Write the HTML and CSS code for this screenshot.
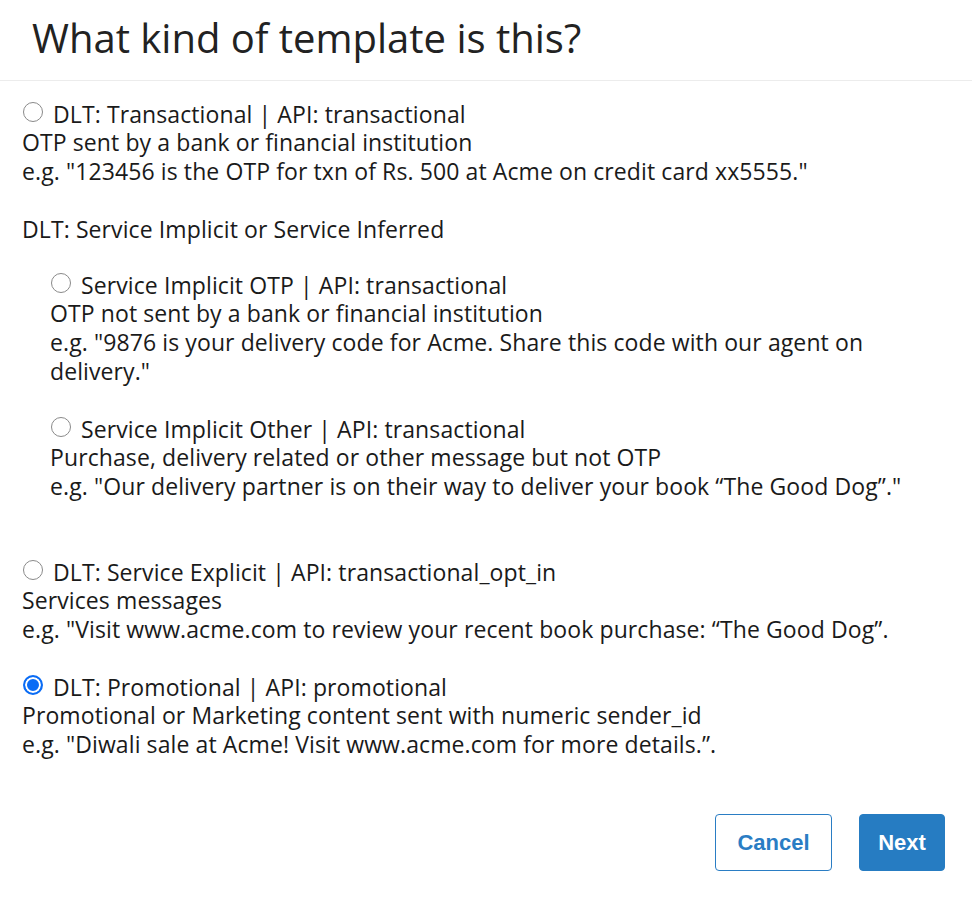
FILE: index.html
```html
<!DOCTYPE html>
<html>
<head>
<meta charset="utf-8">
<link rel="stylesheet" href="styles.css">
</head>
<body>
<div class="modal">
  <header class="modal-header">
    <h1 class="title">What kind of template is this?</h1>
  </header>
  <div class="modal-body">
    <div class="option">
      <label class="opt-label"><span class="radio"></span>DLT: Transactional | API: transactional</label>
      <div>OTP sent by a bank or financial institution</div>
      <div>e.g. "123456 is the OTP for txn of Rs. 500 at Acme on credit card xx5555."</div>
    </div>
    <div class="group-title">DLT: Service Implicit or Service Inferred</div>
    <div class="sub">
      <div class="option">
        <label class="opt-label"><span class="radio"></span>Service Implicit OTP | API: transactional</label>
        <div>OTP not sent by a bank or financial institution</div>
        <div>e.g. "9876 is your delivery code for Acme. Share this code with our agent on delivery."</div>
      </div>
      <div class="option">
        <label class="opt-label"><span class="radio"></span>Service Implicit Other | API: transactional</label>
        <div>Purchase, delivery related or other message but not OTP</div>
        <div>e.g. "Our delivery partner is on their way to deliver your book “The Good Dog”."</div>
      </div>
    </div>
    <div class="option">
      <label class="opt-label"><span class="radio"></span>DLT: Service Explicit | API: transactional_opt_in</label>
      <div>Services messages</div>
      <div>e.g. "Visit www.acme.com to review your recent book purchase: “The Good Dog”.</div>
    </div>
    <div class="option">
      <label class="opt-label"><span class="radio checked"></span>DLT: Promotional | API: promotional</label>
      <div>Promotional or Marketing content sent with numeric sender_id</div>
      <div>e.g. "Diwali sale at Acme! Visit www.acme.com for more details.”.</div>
    </div>
  </div>
  <footer class="modal-footer">
    <button class="btn btn-outline">Cancel</button>
    <button class="btn btn-primary">Next</button>
  </footer>
</div>
</body>
</html>
```
FILE: styles.css
```css
html, body {
  margin: 0;
  padding: 0;
  background: #fff;
}
body {
  font-family: "Open Sans", "Noto Sans", sans-serif;
  color: #1a1a1a;
  font-size: 23px;
  line-height: 29px;
  letter-spacing: 0.1px;
  width: 972px;
}
.modal-header {
  height: 81px;
  border-bottom: 1px solid #ececec;
  box-sizing: border-box;
  padding-left: 32px;
  display: flex;
  align-items: center;
}
.title {
  margin: 0;
  font-weight: 400;
  font-size: 40px;
  letter-spacing: 0;
  color: #222;
  line-height: 1;
  position: relative;
  top: -2px;
}
.modal-body {
  padding: 19px 22px 0 22px;
}
.option {
  margin-bottom: 29px;
}
.opt-label {
  display: flex;
  align-items: center;
  line-height: 28px;
}
.radio {
  width: 20px;
  height: 20px;
  border: 1px solid #8a8a8a;
  border-radius: 50%;
  box-sizing: border-box;
  margin: 0 10px 0 1px;
  flex: none;
  background: #fff;
  position: relative;
  top: -2px;
}
.radio.checked {
  border: 2px solid #0a6cf5;
  background: #0a6cf5;
  box-shadow: inset 0 0 0 2px #fff;
}
.group-title {
  margin-bottom: 27px;
}
.sub {
  padding-left: 28px;
  margin-bottom: 57px;
}
.modal-footer {
  display: flex;
  justify-content: flex-end;
  gap: 27px;
  padding: 26px 27px 0 0;
}
.btn {
  font-family: "Liberation Sans", Arial, sans-serif;
  font-weight: 700;
  font-size: 22px;
  height: 57px;
  border-radius: 4px;
  cursor: pointer;
}
.btn-outline {
  width: 117px;
  background: #fff;
  color: #2a7dc4;
  border: 1px solid #2a7dc4;
}
.btn-primary {
  width: 86px;
  background: #267cc2;
  color: #fff;
  border: 1px solid #267cc2;
}
```
